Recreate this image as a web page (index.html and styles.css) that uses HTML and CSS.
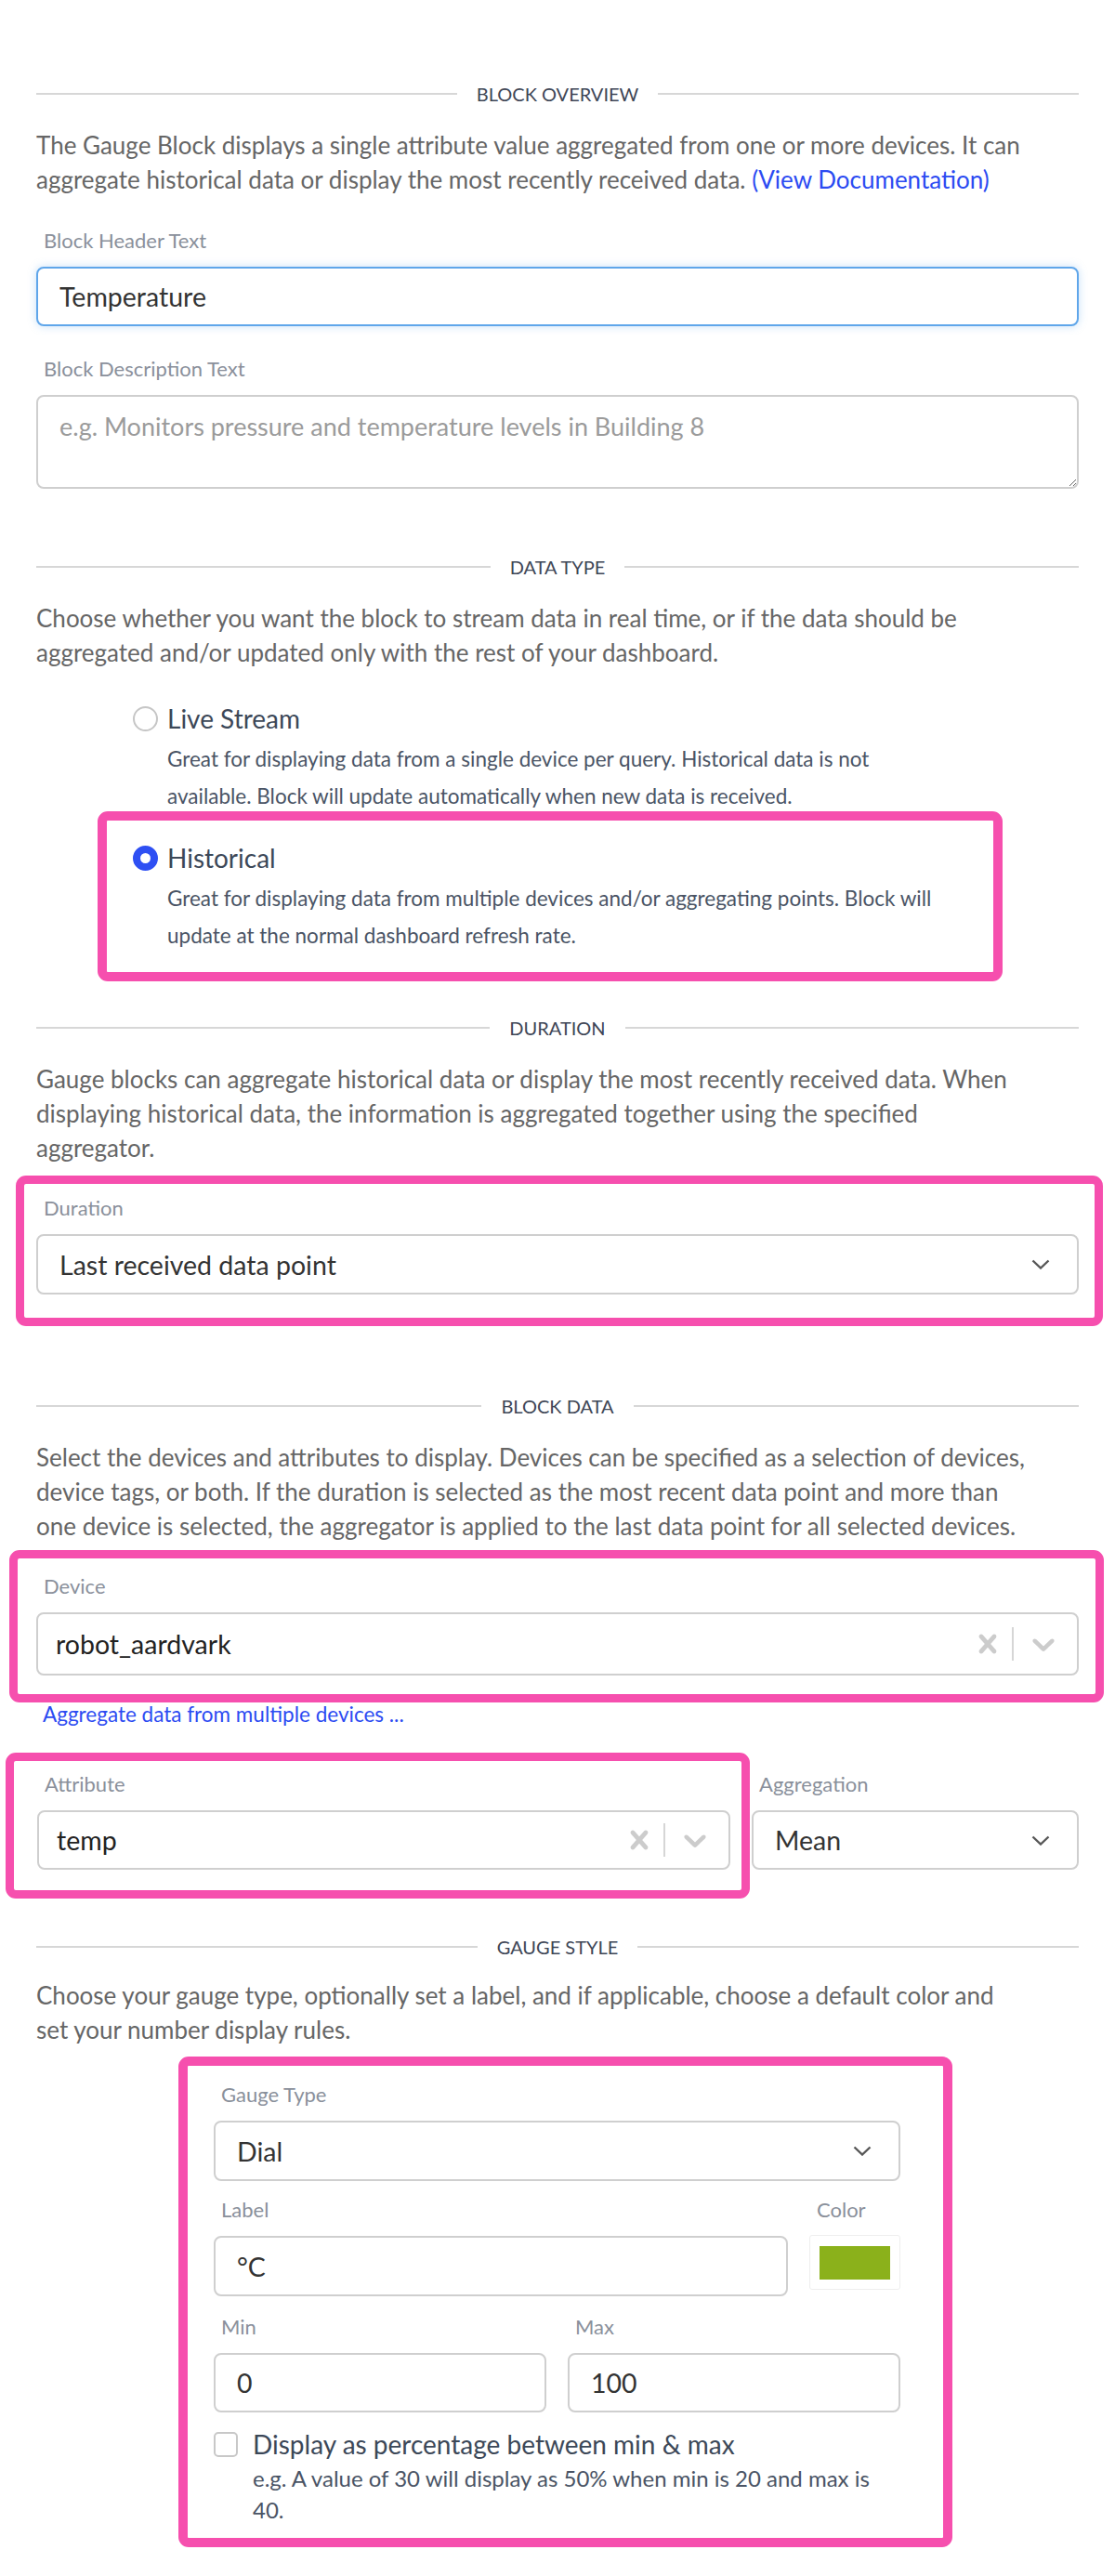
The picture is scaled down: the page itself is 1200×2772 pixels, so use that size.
FILE: index.html
```html
<!DOCTYPE html>
<html lang="en">
<head>
    <meta charset="UTF-8">
    <meta name="viewport" content="width=device-width, initial-scale=1.0">
    <title>Gauge Block</title>
    <link rel="stylesheet" href="styles.css">
</head>
<body>
    <div class="panel">
        <div class="divider"><span>Block Overview</span></div>
        <p class="text">The Gauge Block displays a single attribute value aggregated from one or more devices. It can<br>aggregate historical data or display the most recently received data. <a href="#">(View Documentation)</a></p>

        <div class="field first">
            <label>Block Header Text</label>
            <input class="input focused" type="text" value="Temperature">
        </div>
        <div class="field">
            <label>Block Description Text</label>
            <textarea class="input area" placeholder="e.g. Monitors pressure and temperature levels in Building 8"></textarea>
        </div>

        <div class="divider gap-69"><span>Data Type</span></div>
        <p class="text">Choose whether you want the block to stream data in real time, or if the data should be<br>aggregated and/or updated only with the rest of your dashboard.</p>

        <div class="options">
            <div class="option">
                <div class="option-title"><span class="radio"></span>Live Stream</div>
                <div class="option-desc">Great for displaying data from a single device per query. Historical data is not<br>available. Block will update automatically when new data is received.</div>
            </div>
            <div class="option mark">
                <div class="option-title"><span class="radio checked"></span>Historical</div>
                <div class="option-desc">Great for displaying data from multiple devices and/or aggregating points. Block will<br>update at the normal dashboard refresh rate.</div>
            </div>
        </div>

        <div class="divider gap-35"><span>Duration</span></div>
        <p class="text">Gauge blocks can aggregate historical data or display the most recently received data. When<br>displaying historical data, the information is aggregated together using the specified<br>aggregator.</p>

        <div class="mark mark-duration">
            <label>Duration</label>
            <div class="input select">
                <span>Last received data point</span>
                <svg class="chevron" viewBox="0 0 20 11"><polyline points="1.5,1.5 10,9.5 18.5,1.5"/></svg>
            </div>
        </div>

        <div class="divider gap-71"><span>Block Data</span></div>
        <p class="text">Select the devices and attributes to display. Devices can be specified as a selection of devices,<br>device tags, or both. If the duration is selected as the most recent data point and more than<br>one device is selected, the aggregator is applied to the last data point for all selected devices.</p>

        <div class="mark mark-device">
            <label>Device</label>
            <div class="input picker tall">
                <span class="value">robot_aardvark</span>
                <svg class="ind" viewBox="0 0 20 20"><path d="M14.348 14.849c-0.469 0.469-1.229 0.469-1.697 0l-2.651-3.030-2.651 3.029c-0.469 0.469-1.229 0.469-1.697 0-0.469-0.469-0.469-1.229 0-1.697l2.758-3.15-2.759-3.152c-0.469-0.469-0.469-1.228 0-1.697s1.228-0.469 1.697 0l2.652 3.031 2.651-3.031c0.469-0.469 1.228-0.469 1.697 0s0.469 1.229 0 1.697l-2.758 3.152 2.758 3.15c0.469 0.469 0.469 1.229 0 1.698z"/></svg>
                <span class="sep"></span>
                <svg class="ind" viewBox="0 0 20 20"><path d="M4.516 7.548c0.436-0.446 1.043-0.481 1.576 0l3.908 3.747 3.908-3.747c0.533-0.481 1.141-0.446 1.574 0 0.436 0.445 0.408 1.197 0 1.615-0.406 0.418-4.695 4.502-4.695 4.502-0.217 0.223-0.502 0.335-0.787 0.335s-0.57-0.112-0.789-0.335c0 0-4.287-4.084-4.695-4.502s-0.436-1.17 0-1.615z"/></svg>
            </div>
        </div>
        <a class="more" href="#">Aggregate data from multiple devices ...</a>

        <div class="attr-row">
            <div class="mark mark-attr">
                <label>Attribute</label>
                <div class="input picker">
                    <span class="value">temp</span>
                    <svg class="ind" viewBox="0 0 20 20"><path d="M14.348 14.849c-0.469 0.469-1.229 0.469-1.697 0l-2.651-3.030-2.651 3.029c-0.469 0.469-1.229 0.469-1.697 0-0.469-0.469-0.469-1.229 0-1.697l2.758-3.15-2.759-3.152c-0.469-0.469-0.469-1.228 0-1.697s1.228-0.469 1.697 0l2.652 3.031 2.651-3.031c0.469-0.469 1.228-0.469 1.697 0s0.469 1.229 0 1.697l-2.758 3.152 2.758 3.15c0.469 0.469 0.469 1.229 0 1.698z"/></svg>
                    <span class="sep"></span>
                    <svg class="ind" viewBox="0 0 20 20"><path d="M4.516 7.548c0.436-0.446 1.043-0.481 1.576 0l3.908 3.747 3.908-3.747c0.533-0.481 1.141-0.446 1.574 0 0.436 0.445 0.408 1.197 0 1.615-0.406 0.418-4.695 4.502-4.695 4.502-0.217 0.223-0.502 0.335-0.787 0.335s-0.57-0.112-0.789-0.335c0 0-4.287-4.084-4.695-4.502s-0.436-1.17 0-1.615z"/></svg>
                </div>
            </div>
            <div class="agg">
                <label>Aggregation</label>
                <div class="input select small">
                    <span>Mean</span>
                    <svg class="chevron" viewBox="0 0 20 11"><polyline points="1.5,1.5 10,9.5 18.5,1.5"/></svg>
                </div>
            </div>
        </div>

        <div class="divider gap-37"><span>Gauge Style</span></div>
        <p class="text tight">Choose your gauge type, optionally set a label, and if applicable, choose a default color and<br>set your number display rules.</p>

        <div class="mark mark-style">
            <label>Gauge Type</label>
            <div class="input select">
                <span>Dial</span>
                <svg class="chevron" viewBox="0 0 20 11"><polyline points="1.5,1.5 10,9.5 18.5,1.5"/></svg>
            </div>

            <div class="row label-row">
                <div class="col grow">
                    <label>Label</label>
                    <input class="input" type="text" value="°C">
                </div>
                <div class="col color-col">
                    <label>Color</label>
                    <div class="swatch"><span style="background: #8bb11b"></span></div>
                </div>
            </div>

            <div class="row minmax-row">
                <div class="col grow">
                    <label>Min</label>
                    <input class="input" type="text" value="0">
                </div>
                <div class="col grow">
                    <label>Max</label>
                    <input class="input" type="text" value="100">
                </div>
            </div>

            <div class="check-row">
                <span class="checkbox"></span>
                <span>Display as percentage between min &amp; max</span>
            </div>
            <div class="check-help">e.g. A value of 30 will display as 50% when min is 20 and max is<br>40.</div>
        </div>
    </div>
</body>
</html>
```

FILE: styles.css
```css
* {
    box-sizing: border-box;
}

body {
    margin: 0;
    background-color: #fff;
    font-family: Lato, "Liberation Sans", sans-serif;
}

.panel {
    width: 1200px;
    padding: 86px 39px 26px;
}

a {
    color: #2c4bf2;
    text-decoration: none;
}

/* section headings with a rule on both sides */
.divider {
    display: flex;
    align-items: center;
    gap: 21px;
    height: 30px;
    font-size: 20px;
    color: #3e4656;
    text-transform: uppercase;
}

.divider::before,
.divider::after {
    content: "";
    flex: 1;
    height: 2px;
    background-color: #d7d7d7;
}

.gap-69 { margin-top: 69px; }
.gap-35 { margin-top: 35px; }
.gap-71 { margin-top: 71px; }
.gap-37 { margin-top: 37px; }

.text {
    margin: 22px 0 0;
    font-size: 26px;
    line-height: 37px;
    color: #666;
    white-space: nowrap;
}

.text.tight {
    margin-top: 19px;
}

label {
    display: block;
    height: 30px;
    line-height: 30px;
    padding-left: 8px;
    margin-bottom: 13px;
    font-size: 22px;
    color: #8a909b;
}

.field.first {
    margin-top: 32px;
}

.field {
    margin-top: 31px;
}

.input {
    display: block;
    width: 100%;
    height: 65px;
    padding: 0 23px;
    border: 2px solid #cfcfcf;
    border-radius: 8px;
    background-color: #fff;
    font-family: inherit;
    font-size: 28.5px;
    color: #333;
    outline: none;
}

.input.focused {
    height: 64px;
    border-color: #5fa6ea;
    box-shadow: 0 0 10px rgba(95, 166, 234, 0.35);
}

.input.area {
    height: 101px;
    padding-top: 13px;
    font-size: 27px;
    line-height: 37px;
    resize: vertical;
}

.input.area::placeholder {
    color: #9b9b9b;
}

/* radio choices */
.options {
    margin: 32px 0 0 66px;
    width: 974px;
}

.option {
    padding: 0 10px 0 38px;
}

.option-title {
    display: flex;
    align-items: center;
    gap: 10px;
    height: 40px;
    font-size: 28px;
    color: #3c4858;
}

.radio {
    width: 27px;
    height: 27px;
    border: 2px solid #c6c6c6;
    border-radius: 50%;
    background-color: #fff;
}

.radio.checked {
    border: 8px solid #2e4ff3;
}

.option-desc {
    margin-top: 4px;
    padding-left: 37px;
    font-size: 22.5px;
    line-height: 40px;
    color: #4a5465;
    white-space: nowrap;
}

/* pink highlight frames */
.mark {
    border: 9px solid #f64fae;
    border-radius: 11px;
}

.option.mark {
    margin-top: -4px;
    border-width: 10px;
    padding: 20px 0 19px 28px;
}

.mark-duration {
    margin: 11px -26px 0 -22px;
    padding: 11px 17px 25px 13px;
}

.select {
    display: flex;
    align-items: center;
    justify-content: space-between;
    padding-right: 29px;
}

.chevron {
    width: 20px;
    height: 11px;
    fill: none;
    stroke: #575757;
    stroke-width: 2.4;
}

.mark-device {
    margin: 7px -27px 0 -29px;
    padding: 15px 18px 20px 20px;
}

.picker {
    display: flex;
    align-items: center;
    padding: 0 16px 0 19px;
    color: #222;
}

.picker.tall {
    height: 68px;
}

.picker .value {
    flex: 1;
}

.ind {
    width: 40px;
    height: 40px;
    fill: #cccccc;
}

.sep {
    width: 2px;
    height: 36px;
    margin: 0 12px 0 6px;
    background-color: #d6d6d6;
}

.more {
    display: block;
    margin-top: -2px;
    padding-left: 7px;
    font-size: 22.5px;
    line-height: 30px;
}

.attr-row {
    display: flex;
    margin-top: 26px;
}

.mark-attr {
    margin-left: -33px;
    width: 801px;
    padding: 10px 12px 22px 25px;
}

.mark-attr .input {
    height: 64px;
}

.agg {
    flex: 1;
    margin-left: 2px;
    padding-top: 19px;
}

.agg .input {
    height: 64px;
    padding-left: 23px;
}

.mark-style {
    margin: 10px 0 0 153px;
    width: 833px;
    border-width: 10px;
    padding: 16px 46px 13px 28px;
}

.row {
    display: flex;
    gap: 23px;
}

.col.grow {
    flex: 1;
}

.label-row {
    margin-top: 16px;
}

.minmax-row {
    margin-top: 18px;
}

.minmax-row .input {
    height: 64px;
}

.color-col {
    width: 98px;
}

.swatch {
    height: 59px;
    margin-top: -1px;
    padding: 11px 10px;
    border: 1px solid #eeeeee;
    border-radius: 3px;
}

.swatch span {
    display: block;
    height: 36px;
}

.check-row {
    display: flex;
    align-items: center;
    gap: 16px;
    margin-top: 14px;
    height: 40px;
    font-size: 28px;
    color: #3c4858;
}

.checkbox {
    width: 26px;
    height: 27px;
    border: 2px solid #c8c8c8;
    border-radius: 5px;
}

.check-help {
    padding-left: 42px;
    font-size: 24px;
    line-height: 34px;
    color: #4a5465;
}
```
